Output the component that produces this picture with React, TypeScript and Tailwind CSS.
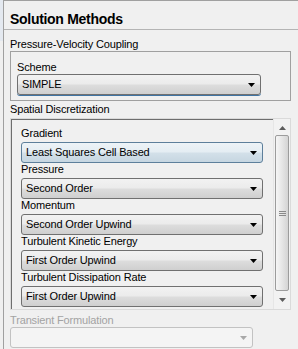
import React from 'react';

type Look = 'normal' | 'focus' | 'hot' | 'disabled';

const Arrow: React.FC<{ up?: boolean; color?: string }> = ({ up, color = '#000' }) => (
  <svg width="7" height="4" viewBox="0 0 7 4" className="shrink-0">
    <path d={up ? 'M0 4h7L3.5 0z' : 'M0 0h7L3.5 4z'} fill={color} />
  </svg>
);

const Combo: React.FC<{ value?: string; look?: Look; width: string }> = ({ value = '', look = 'normal', width }) => {
  const skin =
    look === 'hot'
      ? 'border-[#5d7f9b] bg-[linear-gradient(to_bottom,#edf3f7_0%,#e4edf3_48%,#d3e0e9_52%,#c6d6e1_100%)]'
      : look === 'disabled'
      ? 'border-[#c2c2c2] bg-[#f4f4f4]'
      : 'border-[#707070] bg-[linear-gradient(to_bottom,#f2f2f2_0%,#ebebeb_48%,#dddddd_52%,#cfcfcf_100%)]';
  return (
    <div
      className={`${width} h-[21px] flex items-center justify-between rounded-[3px] border pl-[4px] pr-[5px] text-[11px] leading-[13px] ${skin} ${
        look === 'focus' ? 'shadow-[0_1px_0_#3f74a3]' : ''
      }`}
    >
      <span className="tracking-[-0.15px]">{value}</span>
      <Arrow color={look === 'disabled' ? '#a8a8a8' : '#000'} />
    </div>
  );
};

const Label: React.FC<{ children: React.ReactNode; dim?: boolean }> = ({ children, dim }) => (
  <div className={`h-[13px] text-[11px] leading-[13px] tracking-[-0.15px] whitespace-nowrap ${dim ? 'text-[#a3a3a3]' : 'text-black'}`}>
    {children}
  </div>
);

const rows = [
  { label: 'Gradient', value: 'Least Squares Cell Based', look: 'hot' as Look },
  { label: 'Pressure', value: 'Second Order', look: 'normal' as Look },
  { label: 'Momentum', value: 'Second Order Upwind', look: 'normal' as Look },
  { label: 'Turbulent Kinetic Energy', value: 'First Order Upwind', look: 'normal' as Look },
  { label: 'Turbulent Dissipation Rate', value: 'First Order Upwind', look: 'normal' as Look },
];

export default function App() {
  return (
    <div className="w-[298px] h-[349px] overflow-hidden bg-[#f0f0f0] flex font-['Liberation_Sans',Arial,sans-serif] text-black">
      <div className="w-[3px] shrink-0">
        <div className="h-[41px] bg-[#e4e9f0]" />
      </div>
      <div className="flex-1 flex flex-col border-l border-t border-[#a0a0a0]">
        <div className="h-[29px] border-b border-[#b4b4b4] pl-[6px] pt-[10px] text-[14px] leading-[16px] font-bold tracking-[-0.3px]">
          Solution Methods
        </div>

        <div className="pl-[6px] flex flex-col">
          <div className="mt-[8px]">
            <Label>Pressure-Velocity Coupling</Label>
          </div>
          <div className="w-[281px] h-[50px] border border-[#a0a0a0] px-[6px] pt-[9px]">
            <Label>Scheme</Label>
            <Combo value="SIMPLE" look="focus" width="w-[244px]" />
          </div>

          <div className="mt-[2px]">
            <Label>Spatial Discretization</Label>
          </div>
          <div className="mt-[2px] w-[281px] h-[192px] flex border border-[#dadada]">
            <div className="flex-1 border-t border-l border-[#6e6e6e] pl-[9px] pt-[7px]">
              {rows.map((r) => (
                <div key={r.label} className="h-[36px]">
                  <Label>{r.label}</Label>
                  <div className="mt-[2px]">
                    <Combo value={r.value} look={r.look} width="w-[242px]" />
                  </div>
                </div>
              ))}
            </div>
            <div className="w-[17px] flex flex-col bg-[#f2f2f2] border-l border-[#e6e6e6]">
              <div className="h-[16px] flex items-center justify-center pt-[1px]">
                <Arrow up color="#5c5c5c" />
              </div>
              <div className="h-[156px] ml-[1px] mr-[1px] rounded-[2px] border border-[#9c9c9c] bg-[linear-gradient(to_right,#f6f6f6_0%,#e6e6e6_50%,#d4d4d4_100%)] flex flex-col items-center justify-center gap-[1px]">
                <div className="w-[7px] h-px bg-[#8a8a8a]" />
                <div className="w-[7px] h-px bg-[#8a8a8a]" />
                <div className="w-[7px] h-px bg-[#8a8a8a]" />
              </div>
              <div className="flex-1 flex items-center justify-center">
                <Arrow color="#5c5c5c" />
              </div>
            </div>
          </div>

          <div className="mt-[4px]">
            <Label dim>Transient Formulation</Label>
          </div>
          <Combo look="disabled" width="w-[243px]" />
        </div>
      </div>
    </div>
  );
}
